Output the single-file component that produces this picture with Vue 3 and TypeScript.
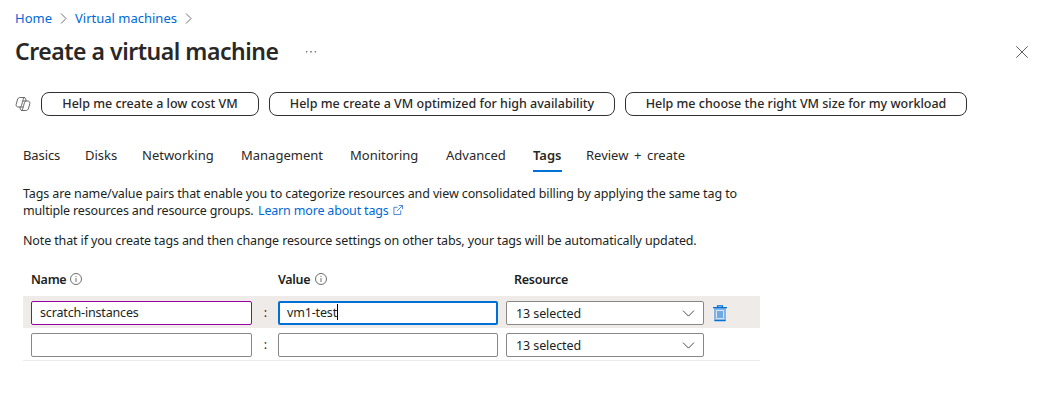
<script setup lang="ts">
interface Tab {
  id: string
  label: string
}

interface TagRow {
  name: string
  value: string
  resource: string
  active: boolean
}

const suggestions: { id: string; label: string }[] = [
  { id: 'cost', label: 'Help me create a low cost VM' },
  { id: 'availability', label: 'Help me create a VM optimized for high availability' },
  { id: 'size', label: 'Help me choose the right VM size for my workload' },
]

const tabs: Tab[] = [
  { id: 'basics', label: 'Basics' },
  { id: 'disks', label: 'Disks' },
  { id: 'networking', label: 'Networking' },
  { id: 'management', label: 'Management' },
  { id: 'monitoring', label: 'Monitoring' },
  { id: 'advanced', label: 'Advanced' },
  { id: 'tags', label: 'Tags' },
  { id: 'review', label: 'Review + create' },
]
const activeTab = 'tags'

const rows: TagRow[] = [
  { name: 'scratch-instances', value: 'vm1-test', resource: '13 selected', active: true },
  { name: '', value: '', resource: '13 selected', active: false },
]
</script>

<template>
  <main class="blade">
    <nav class="crumbs">
      <a class="crumb home">Home</a>
      <svg class="sep" viewBox="0 0 7 11"><path d="M1 .5 6 5.500 1 10.500" /></svg>
      <a class="crumb machines">Virtual machines</a>
      <svg class="sep" viewBox="0 0 7 11"><path d="M1 .5 6 5.500 1 10.500" /></svg>
    </nav>

    <header class="heading">
      <h1>Create a virtual machine</h1>
      <svg class="more" viewBox="0 0 12 2"><path d="M1 0h1.300v1.500H1zM5.200 0h1.600v1.500H5.200zM9.700 0H11v1.500H9.700z" /></svg>
      <svg class="close" viewBox="0 0 12 12"><path d="M.3.3 11.700 11.700M11.700.3.3 11.700" /></svg>
    </header>

    <section class="assist">
      <svg class="copilot" viewBox="0 0 16 16">
        <path d="M8.200 3.400C7.800 4.800 7 8 6.500 9.400 6.200 10.500 5.600 11 4.700 11H3.200C1.500 11 .8 9.700 1.200 8.200L2.400 4C2.800 2.400 3.700 1.500 5.200 1.500H9c.9 0 1.400.5 1.600 1.300l.5 1.900" />
        <path d="M7.800 12.600c.4-1.400 1.200-4.600 1.700-6 .3-1.100.9-1.600 1.800-1.600h1.500c1.700 0 2.400 1.300 2 2.800L13.600 12c-.4 1.600-1.300 2.500-2.800 2.500H7c-.9 0-1.400-.5-1.600-1.300l-.5-1.900" />
        <path d="M8.200 3.400c.3-1.200.7-1.900 1.500-1.900M7.800 12.600c-.3 1.200-.7 1.900-1.500 1.900M7.800 5h3.500M4.700 11h3.500" />
      </svg>
      <button v-for="item in suggestions" :key="item.id" :class="['pill', item.id]">
        <span>{{ item.label }}</span>
      </button>
    </section>

    <nav class="tabs">
      <a v-for="tab in tabs" :key="tab.id" :class="['tab', tab.id, { active: tab.id === activeTab }]">{{ tab.label }}</a>
    </nav>

    <section class="copy">
      <p class="line first">Tags are name/value pairs that enable you to categorize resources and view consolidated billing by applying the same tag to</p>
      <p class="line second">
        <span class="lead">multiple resources and resource groups.</span>
        <a class="learn">Learn more about tags</a>
        <svg class="external" viewBox="0 0 11 11"><path d="M5 2.500H1v8h7.500V6M6.500.5h4v4M10.500.5 4.500 6.500" /></svg>
      </p>
      <p class="line note">Note that if you create tags and then change resource settings on other tabs, your tags will be automatically updated.</p>
    </section>

    <section class="grid">
      <div class="grid-row head">
        <div class="label name-label">
          <span>Name</span>
          <svg class="info" viewBox="0 0 12 12"><circle cx="6" cy="6" r="5.500" /><path d="M6 5v4M6 3v1" /></svg>
        </div>
        <span></span>
        <div class="label value-label">
          <span>Value</span>
          <svg class="info" viewBox="0 0 12 12"><circle cx="6" cy="6" r="5.500" /><path d="M6 5v4M6 3v1" /></svg>
        </div>
        <span></span>
        <div class="label resource-label"><span>Resource</span></div>
      </div>

      <div v-for="(row, i) in rows" :key="i" :class="['grid-row', 'entry', { active: row.active }]">
        <div class="field name"><span>{{ row.name }}</span></div>
        <span class="colon">:</span>
        <div class="field value"><span>{{ row.value }}</span><i v-if="row.active" class="caret"></i></div>
        <span></span>
        <div class="field select">
          <span>{{ row.resource }}</span>
          <svg class="chevron" viewBox="0 0 14 8"><path d="M.7.7 7 7 13.300.7" /></svg>
        </div>
        <svg v-if="row.active" class="trash" viewBox="0 0 14 17">
          <path class="tint" d="M1 3h12v13H1z" />
          <path class="inner" d="M3.500 5.500h7v8h-7z" />
          <path class="edge" d="M0 2.700h14M4.500 2.500V.8h5v1.700M1.500 15.700h11" />
        </svg>
      </div>
    </section>
  </main>
</template>

<style>
body {
  background: #fff;
}
</style>

<style scoped>
.blade {
  box-sizing: border-box;
  width: 1043px;
  height: 412px;
  overflow: hidden;
  background: #fff;
  color: #201f1e;
  font-family: "Noto Sans", "Open Sans", sans-serif;
  font-size: 12.5px;
  white-space: nowrap;
}

svg {
  display: block;
  flex: none;
  overflow: visible;
  fill: none;
  stroke: #605e5c;
}

a {
  color: #0069d9;
}

.crumbs {
  display: flex;
  align-items: center;
  height: 20px;
  padding: 8px 0 0 15px;
}

.crumb {
  font-size: 13px;
}

.home {
  width: 38px;
}

.machines {
  width: 103px;
}

.sep {
  width: 7px;
  height: 11px;
  margin: 1px 7px 0 7px;
  stroke-width: 0.9;
}

.home + .sep {
  margin-right: 8px;
}

.heading {
  display: flex;
  align-items: center;
  height: 44px;
  padding: 2px 15px 0;
}

h1 {
  width: 290px;
  margin: -2px 0 0;
  font-size: 23px;
  font-weight: 600;
  letter-spacing: -0.47px;
  color: #292827;
}

.more {
  width: 12px;
  height: 2px;
  fill: #797775;
  stroke: none;
}

.close {
  width: 12px;
  height: 12px;
  margin-left: auto;
  stroke-width: 1;
}

.assist {
  display: flex;
  align-items: center;
  gap: 10px;
  height: 24px;
  margin-top: 18px;
  padding-left: 15px;
}

.copilot {
  width: 16px;
  height: 16px;
  stroke-width: 0.95;
}

.pill {
  display: flex;
  align-items: center;
  justify-content: center;
  box-sizing: border-box;
  height: 24px;
  padding: 0 0 1px;
  border: 1px solid #323130;
  border-radius: 8px;
  background: #fff;
  color: #292827;
  font: 500 12.5px "Noto Sans", sans-serif;
}

.cost {
  width: 218px;
}

.availability {
  width: 346px;
}

.size {
  width: 342px;
}

.tabs {
  display: flex;
  gap: 25px;
  height: 30px;
  margin: 26px 0 0 23px;
}

.tab {
  box-sizing: border-box;
  height: 30px;
  color: #292827;
  font-size: 13px;
  line-height: 26px;
}

.basics {
  width: 37px;
  letter-spacing: -0.1px;
}

.disks {
  width: 32px;
}

.networking {
  width: 74px;
}

.management {
  width: 84px;
}

.monitoring {
  width: 71px;
}

.advanced {
  width: 62px;
}

.tab.active {
  width: 29px;
  border-bottom: 2px solid #0070d9;
  font-weight: 600;
}

.tab.review {
  margin-left: -1px;
  word-spacing: 2.2px;
}

.copy {
  padding: 13px 0 0 23px;
}

.line {
  display: flex;
  align-items: center;
  height: 17px;
  margin: 0;
}

.first {
  letter-spacing: -0.115px;
}

.second {
  letter-spacing: -0.17px;
}

.note {
  margin-top: 13px;
  letter-spacing: -0.135px;
}

.lead {
  width: 235px;
}

.learn {
  width: 135px;
}

.external {
  width: 10px;
  height: 10px;
  margin-bottom: 1px;
  stroke: #4079de;
  stroke-width: 1;
}

.grid {
  width: 737px;
  margin: 15px 0 0 23px;
}

.grid-row {
  display: grid;
  grid-template-columns: 221px 26px 220px 8px 198px 1fr;
  align-items: center;
  box-sizing: border-box;
  height: 32px;
  padding-left: 8px;
}

.head {
  padding-bottom: 2px;
}

.entry {
  padding-top: 1px;
}

.entry:last-child {
  height: 33px;
  border-bottom: 1px solid #edebe9;
}

.entry.active {
  background: #efebe8;
}

.label {
  display: flex;
  align-items: center;
  gap: 4px;
  font-weight: 600;
  letter-spacing: -0.3px;
}

.name-label span {
  width: 35px;
}

.value-label span {
  width: 33px;
}

.resource-label {
  padding-left: 8px;
  letter-spacing: -0.25px;
}

.info {
  width: 12px;
  height: 12px;
  stroke-width: 0.9;
}

.field {
  display: flex;
  align-items: center;
  box-sizing: border-box;
  height: 24px;
  padding: 0 8px;
  border: 1px solid #8a8886;
  border-radius: 2px;
  background: #fff;
  letter-spacing: -0.16px;
}

.name,
.value {
  padding-bottom: 1px;
}

.entry.active .name {
  border-color: #9b00a5;
}

.entry.active .value {
  padding: 0 7px 1px;
  border: 2px solid #0070d9;
}

.caret {
  width: 1px;
  height: 16px;
  background: #000;
}

.colon {
  padding-left: 1px;
  text-align: center;
}

.field.select {
  justify-content: space-between;
  padding: 1px 8px 0 9px;
  letter-spacing: -0.1px;
}

.chevron {
  width: 13px;
  height: 7px;
  stroke: #323130;
}

.trash {
  width: 14px;
  height: 17px;
  margin: 1px 0 0 9px;
}

.tint {
  fill: #83b4e8;
  stroke: none;
}

.inner {
  fill: #6ea9e6;
  stroke: #dbe4ee;
}

.edge {
  stroke: #0070d9;
  stroke-width: 1.2;
}
</style>
